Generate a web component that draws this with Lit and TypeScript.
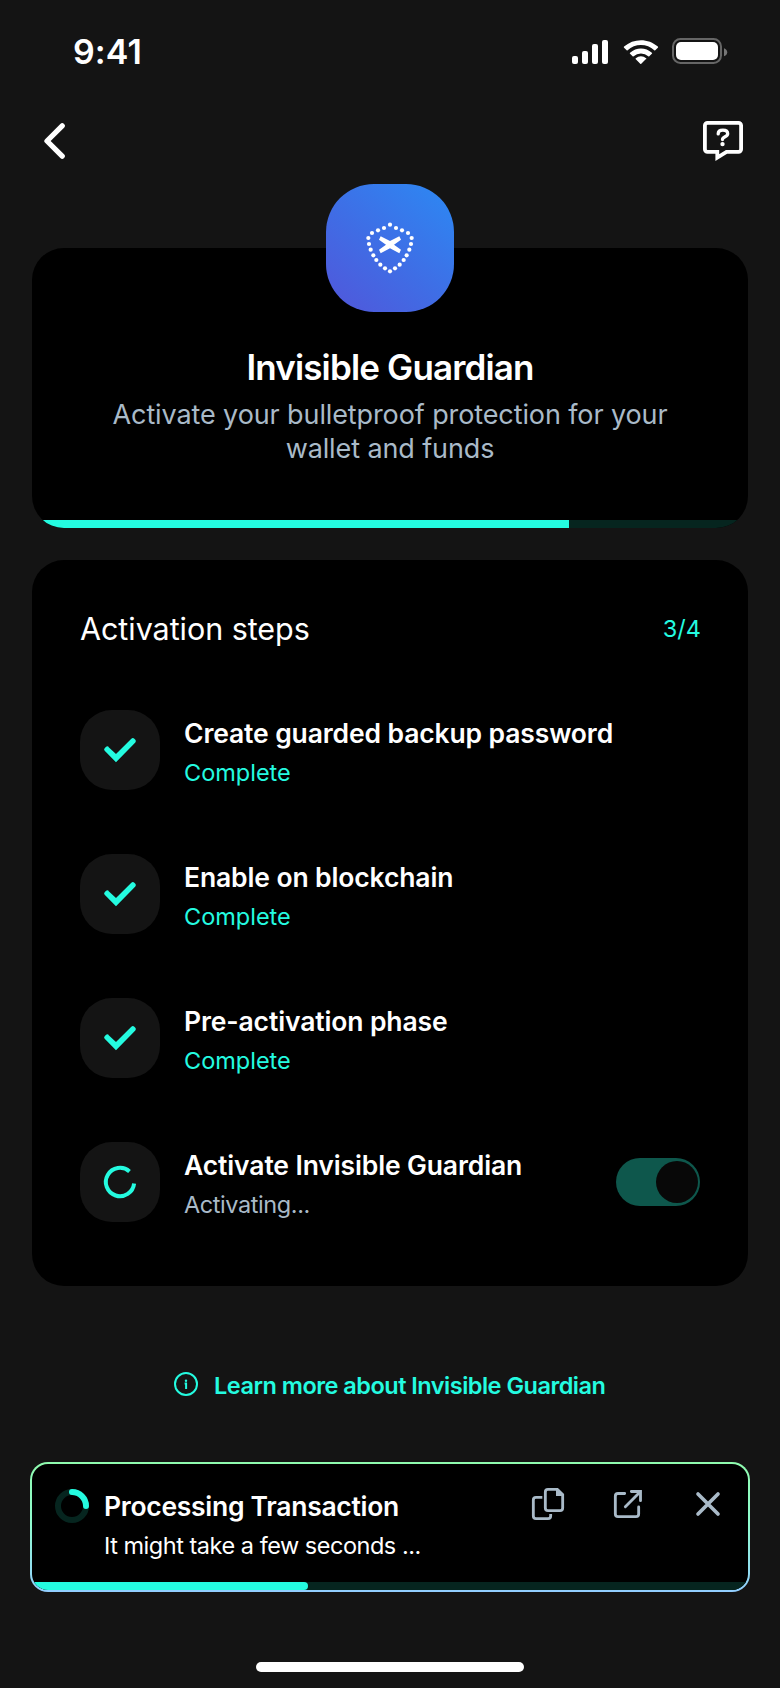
import { LitElement, html, css, svg } from "lit";
import { customElement, property } from "lit/decorators.js";

const half = [
  [222, 174], [204, 181], [186, 189], [175, 204], [177, 222], [182, 239],
  [190, 256], [199, 270], [211, 284], [225, 295],
];
const dots = [[240, 164], [240, 304], ...half, ...half.map(([x, y]) => [480 - x, y])];

const checkIcon = html`<svg width="80" height="80" viewBox="0 0 240 240" fill="none">
  <path d="M75.500 119 L84.500 110 L108 132 L154 86.500 Q158.500 82 163 86.500 L166 89.500 Q169.500 93.500 166 97.500 L108 156.500 L74 122.500 Q70.500 118.500 74 114.500 L77.500 111 Q82 106.500 86.500 111" fill="#24fbe0" />
</svg>`;

const spinnerIcon = html`<svg width="80" height="80" viewBox="0 0 240 240" fill="none">
  <path d="M162.300 124.500 A42.500 42.500 0 1 1 148.500 88.500" stroke="#24fbe0" stroke-width="12" />
</svg>`;

@customElement("step-row")
class StepRow extends LitElement {
  @property() label = "";
  @property() status = "";
  @property({ type: Boolean }) active = false;

  static styles = css`
    :host { display: flex; align-items: center; height: 80px; }
    .tile { width: 80px; height: 80px; border-radius: 32px; background: #141414; flex: none; }
    .tile svg { display: block; }
    .text { flex: 1; padding-left: 24px; }
    .label {
      font-size: 26.5px; font-weight: 600; line-height: 36px; color: #fff;
      letter-spacing: -0.13px; white-space: nowrap; margin-top: 4px;
    }
    .status { font-size: 23.5px; line-height: 32px; margin-top: 6px; color: #24fbe0; }
    .status.pending { color: #a9bac8; letter-spacing: -0.42px; }
    .toggle {
      width: 84px; height: 48px; border-radius: 24px; background: #0e574c;
      display: flex; align-items: center; justify-content: flex-end;
      box-sizing: border-box; padding-right: 2.500px; flex: none;
    }
    .knob { width: 42px; height: 42px; border-radius: 50%; background: #080808; }
  `;

  render() {
    return html`
      <div class="tile">${this.active ? spinnerIcon : checkIcon}</div>
      <div class="text">
        <div class="label">${this.label}</div>
        <div class="status ${this.active ? "pending" : ""}">${this.status}</div>
      </div>
      ${this.active ? html`<div class="toggle"><div class="knob"></div></div>` : ""}
    `;
  }
}

@customElement("app-root")
class AppRoot extends LitElement {
  static styles = css`
    :host {
      display: flex; flex-direction: column; width: 780px; height: 1688px;
      background: #141414; color: #fff; overflow: hidden;
      font-family: Inter, "Liberation Sans", sans-serif;
    }
    svg { display: block; flex: none; }
    .statusbar {
      height: 104px; padding: 0 52px 0 73px; flex: none;
      display: flex; align-items: center; justify-content: space-between;
    }
    .time { font-size: 34px; line-height: 40px; font-weight: 600; letter-spacing: 0.1px; }
    .nav {
      height: 74px; padding: 0 36px 0 42px; flex: none;
      display: flex; align-items: center; justify-content: space-between;
    }
    .hero { margin: 6px 32px 0; display: flex; flex-direction: column; align-items: center; flex: none; }
    .badge {
      width: 128px; height: 128px; border-radius: 48px; z-index: 1;
      background: linear-gradient(40deg, #5058db 4%, #3f6de5 46%, #2e86f2 94%);
    }
    .card { background: #000; border-radius: 32px; overflow: hidden; flex: none; }
    .hero-card {
      width: 716px; height: 280px; margin-top: -64px; box-sizing: border-box;
      padding-top: 97px; text-align: center; display: flex; flex-direction: column;
    }
    .title { font-size: 35px; line-height: 44px; font-weight: 600; letter-spacing: -0.85px; }
    .subtitle {
      font-size: 27px; line-height: 34px; letter-spacing: -0.11px; color: #a9bac8;
      margin-top: 9px;
    }
    .track { height: 8px; background: #06251f; margin-top: auto; flex: none; }
    .fill { height: 100%; background: #24fbe0; }
    .steps {
      margin: 32px 32px 0; height: 726px; padding: 48px; box-sizing: border-box;
      display: flex; flex-direction: column; gap: 64px;
    }
    .steps-head { display: flex; justify-content: space-between; height: 38px; align-items: center; }
    .steps-title { font-size: 30.5px; line-height: 40px; letter-spacing: -0.05px; margin-top: 3px; }
    .steps-count { font-size: 23.5px; line-height: 40px; color: #24fbe0; margin: 3px -1px 0 0; }
    .learn {
      margin-top: 86px; height: 24px; flex: none; color: #24fbe0;
      display: flex; align-items: center; padding-left: 174px; gap: 16px;
    }
    .learn-text { font-size: 23.5px; font-weight: 600; line-height: 28px; letter-spacing: -0.505px; padding-top: 3px; }
    .toast {
      margin: 66px 30px 0; height: 130px; flex: none; border-radius: 18px; padding: 2px;
      box-sizing: border-box;
      background: linear-gradient(180deg, #8ffbae 0%, #90fcd0 48%, #92ceff 100%);
    }
    .toast-inner {
      height: 126px; border-radius: 16px; background: #000; overflow: hidden;
      display: flex; flex-direction: column;
    }
    .toast-body { display: flex; padding-left: 20px; }
    .ring { margin-top: 22px; }
    .toast-text { padding: 25px 0 0 12px; flex: 1; white-space: nowrap; }
    .toast-title { font-size: 26.5px; font-weight: 600; line-height: 34px; letter-spacing: -0.29px; }
    .toast-sub { font-size: 23.5px; line-height: 32px; letter-spacing: -0.48px; margin-top: 7px; }
    .actions { display: flex; gap: 40px; padding: 20px 20px 0 0; height: 40px; }
    .toast .fill { border-radius: 0 4px 4px 0; }
    .home { width: 268px; height: 10px; border-radius: 5px; background: #fff; margin: 70px auto 0; flex: none; }
  `;

  private steps = [
    { label: "Create guarded backup password", status: "Complete", active: false },
    { label: "Enable on blockchain", status: "Complete", active: false },
    { label: "Pre-activation phase", status: "Complete", active: false },
    { label: "Activate Invisible Guardian", status: "Activating...", active: true },
  ];

  private progress = 75;
  private toastProgress = 38.5;

  render() {
    return html`
      <div class="statusbar">
        <span class="time">9:41</span>
        <svg width="156" height="28" viewBox="572 38 156 28">
          <g fill="#fff">
            <rect x="572" y="56" width="6" height="8" rx="2" />
            <rect x="582" y="51" width="6" height="13" rx="2" />
            <rect x="592" y="44" width="6" height="20" rx="2" />
            <rect x="602" y="40" width="6" height="24" rx="2" />
            <path transform="translate(623.900 40) scale(1.990 2.030)" d="M8.571 2.466c2.487 0 4.878.923 6.681 2.576a.36.36 0 0 0 .505-.005l1.298-1.266a.358.358 0 0 0-.003-.513C12.382-.99 4.760-.99.090 3.258a.358.358 0 0 0-.003.513l1.298 1.266a.36.36 0 0 0 .505.005c1.803-1.653 4.195-2.576 6.681-2.576Zm-.003 4.220a5.570 5.570 0 0 1 3.681 1.371c.143.133.368.130.507-.007l1.297-1.265a.358.358 0 0 0-.006-.518c-3.087-2.810-7.869-2.810-10.956 0a.358.358 0 0 0-.006.518l1.297 1.265c.139.136.364.140.507.007a5.570 5.570 0 0 1 3.679-1.371Zm2.605 2.810a.35.35 0 0 0-.010-.513 3.900 3.900 0 0 0-5.178 0 .35.35 0 0 0-.010.513l2.242 2.187a.366.366 0 0 0 .510 0l2.242-2.187Z" />
            <rect x="676" y="42" width="42" height="18" rx="5" />
          </g>
          <rect x="673" y="39" width="48" height="24" rx="7.500" fill="none" stroke="#666" stroke-width="2" />
          <path d="M724 48.200 C726.200 49 727.200 50.400 727.200 52.200 S726.200 55.400 724 56.200 Z" fill="#767676" />
        </svg>
      </div>

      <div class="nav">
        <svg width="26" height="40" viewBox="42 121 26 40" fill="none">
          <path d="M62.200 125.800 L47 141 L62.200 156.200" stroke="#fff" stroke-width="5.300" stroke-linecap="round" stroke-linejoin="round" />
        </svg>
        <svg width="42" height="42" viewBox="702 120 42 42" fill="none" stroke="#fff">
          <path d="M707.500 122.900 H738.500 A2.600 2.600 0 0 1 741.100 125.500 V149.300 A2.600 2.600 0 0 1 738.500 151.900 H726.500 L717.300 157.600 V151.900 H707.500 A2.600 2.600 0 0 1 704.900 149.300 V125.500 A2.600 2.600 0 0 1 707.500 122.900 Z" stroke-width="3.800" />
          <path d="M718.200 133.900 C718.200 131.200 720 130.100 722.900 130.100 C725.900 130.100 727.700 131.500 727.700 133.800 C727.700 137 722.500 136.600 722.500 139.600" stroke-width="3.300" stroke-linecap="round" />
          <circle cx="722.500" cy="144.100" r="2.200" fill="#fff" stroke="none" />
        </svg>
      </div>

      <div class="hero">
        <div class="badge">
          <svg width="128" height="128" viewBox="48 42 384 384">
            ${dots.map(([x, y]) => svg`<circle cx=${x} cy=${y} r="6.300" fill="#fff" />`)}
            <path d="M212 199 L240 213 L268 199 L273 209 L252 224 L273 239 L268 250 L240 235 L212 250 L207 239 L228 224 L207 209 Z" fill="#fff" />
          </svg>
        </div>
        <div class="card hero-card">
          <div class="title">Invisible Guardian</div>
          <div class="subtitle">Activate your bulletproof protection for your<br />wallet and funds</div>
          <div class="track"><div class="fill" style="width:${this.progress}%"></div></div>
        </div>
      </div>

      <div class="card steps">
        <div class="steps-head">
          <span class="steps-title">Activation steps</span>
          <span class="steps-count">3/4</span>
        </div>
        ${this.steps.map((s) => html`<step-row .label=${s.label} .status=${s.status} .active=${s.active}></step-row>`)}
      </div>

      <div class="learn">
        <svg width="24" height="24" viewBox="0 0 24 24">
          <circle cx="12" cy="12" r="11" fill="none" stroke="#24fbe0" stroke-width="2" />
          <circle cx="12" cy="8.700" r="1.200" fill="#24fbe0" />
          <path d="M10.600 11.500 H12.100 V17" fill="none" stroke="#24fbe0" stroke-width="2" />
        </svg>
        <span class="learn-text">Learn more about Invisible Guardian</span>
      </div>

      <div class="toast">
        <div class="toast-inner">
          <div class="toast-body">
            <svg class="ring" width="40" height="40" viewBox="96 438 120 120" fill="none">
              <circle cx="156" cy="498" r="42" stroke="#06251f" stroke-width="18" />
              <path d="M156 456 A42 42 0 0 1 198 498" stroke="#24fbe0" stroke-width="18" stroke-linecap="round" />
            </svg>
            <div class="toast-text">
              <div class="toast-title">Processing Transaction</div>
              <div class="toast-sub">It might take a few seconds ...</div>
            </div>
            <div class="actions">
              <svg width="40" height="40" viewBox="384 432 120 120" fill="none" stroke="#a9bac8" stroke-width="8.500">
                <path d="M444 448 H472 L488 464 V504 A8 8 0 0 1 480 512 H444 A8 8 0 0 1 436 504 V456 A8 8 0 0 1 444 448 Z" />
                <path d="M468 446 V468 H490 L486 458 L476 448 Z" fill="#a9bac8" stroke="none" />
                <path d="M427 472 H408 A8 8 0 0 0 400 480 V528 A8 8 0 0 0 408 536 H444 A8 8 0 0 0 452 528 V522" />
              </svg>
              <svg width="40" height="40" viewBox="624 432 120 120" fill="none" stroke="#a9bac8" stroke-width="8.500">
                <path d="M674 460.500 H654 A8 8 0 0 0 646 468.500 V522 A8 8 0 0 0 654 530 H708 A8 8 0 0 0 716 522 V501" stroke-linecap="round" />
                <path d="M676 500 L720 456" stroke-linecap="round" />
                <path d="M694 454.500 H721.500 V482" stroke-linecap="round" />
              </svg>
              <svg width="40" height="40" viewBox="864 432 120 120" fill="none" stroke="#a9bac8" stroke-width="11">
                <path d="M894 462 L954 522 M954 462 L894 522" stroke-linecap="round" />
              </svg>
            </div>
          </div>
          <div class="track"><div class="fill" style="width:${this.toastProgress}%"></div></div>
        </div>
      </div>
      <div class="home"></div>
    `;
  }
}
